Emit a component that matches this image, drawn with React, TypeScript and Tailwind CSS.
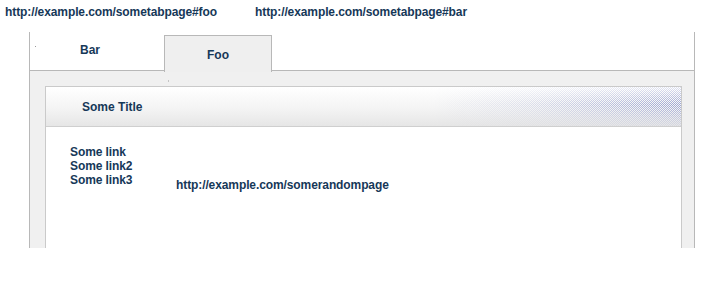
const textColor = 'text-[#163858]';

const App = () => {
  return (
    <main className="w-[701px] h-[298px] bg-white font-['Liberation_Sans',Arial,sans-serif] text-[12px] font-bold relative">
      {/* Top links */}
      <div className={`flex pt-[5px] pl-[5px] leading-[14px] tracking-[-0.1px] ${textColor}`}>
        <a className="w-[250px]">http://example.com/sometabpage#foo</a>
        <a>http://example.com/sometabpage#bar</a>
      </div>

      {/* Tab widget */}
      <div className="ml-[29px] mt-[13px] w-[666px] h-[216px] border-l border-r border-[#b8b8b8] flex flex-col">
        {/* Tab strip */}
        <div className="flex h-[39px] shrink-0 border-b border-[#b8b8b8]">
          <div className={`relative w-[134px] flex justify-center pt-[9px] ${textColor}`}>
            <span className="absolute left-[5px] top-[14px] w-px h-px bg-[#9a9a9a]" />
            <span className="ml-[-14px]">Bar</span>
          </div>
          <div
            className={`mt-[3px] w-[108px] h-[37px] border-t border-l border-r border-[#b8b8b8] bg-[#efefef] flex justify-center pt-[10px] relative z-10 ${textColor}`}
          >
            Foo
          </div>
        </div>

        {/* Content */}
        <div className="flex-1 bg-[#f0f0f0] pl-[15px] pr-[12px] pt-[15px] flex flex-col relative">
          <span className="absolute left-[138px] top-[9px] w-px h-[2px] bg-[#c4c4c4]" />
          <div className="flex-1 flex flex-col border-t border-l border-r border-[#cacaca] bg-white">
            <div className="relative h-[40px] shrink-0 border-b border-[#cfcfcf] bg-[linear-gradient(to_bottom,#ffffff,#f4f4f4_55%,#e6e6e6)] flex items-center">
              <div className="absolute right-0 top-0 bottom-0 w-[248px] bg-[repeating-conic-gradient(#9ca5d2_0_25%,transparent_0_50%)] bg-[length:2px_2px] [mask-image:linear-gradient(to_right,transparent,rgba(0,0,0,0.3)_40%,#000),linear-gradient(to_bottom,rgba(0,0,0,0.3),#000_45%,rgba(0,0,0,0.2))] [mask-composite:intersect]" />
              <span className={`relative pl-[36px] pt-[1px] ${textColor}`}>Some Title</span>
            </div>
            <div className="flex pt-[18px] leading-[14px] tracking-[-0.1px]">
              <div className={`flex flex-col pl-[24px] w-[130px] ${textColor}`}>
                <a>Some link</a>
                <a>Some link2</a>
                <a>Some link3</a>
              </div>
              <a className={`mt-[33px] ${textColor}`}>http://example.com/somerandompage</a>
            </div>
          </div>
        </div>
      </div>
    </main>
  );
};

export default App;
